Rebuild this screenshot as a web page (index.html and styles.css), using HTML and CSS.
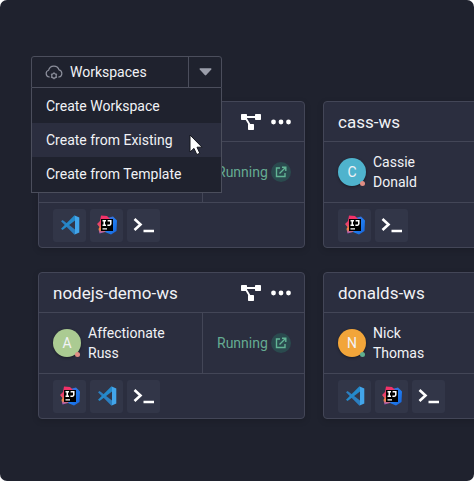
FILE: index.html
```html
<!DOCTYPE html>
<html lang="en">

<head>
    <meta charset="UTF-8">
    <meta name="viewport" content="width=device-width, initial-scale=1">
    <title>Workspaces</title>
    <link rel="stylesheet" href="styles.css">
</head>

<body>
    <!-- shared icons -->
    <svg class="sprite" aria-hidden="true">
        <defs>
            <linearGradient id="ij-warm" x1="0" y1="0" x2="0" y2="1">
                <stop offset="0" stop-color="#f52d68" />
                <stop offset="0.5" stop-color="#e8436b" />
                <stop offset="0.75" stop-color="#f58a3c" />
                <stop offset="1" stop-color="#9b4fc9" />
            </linearGradient>
            <linearGradient id="ij-cool" x1="0" y1="0" x2="1" y2="1">
                <stop offset="0" stop-color="#5a5fc4" />
                <stop offset="0.5" stop-color="#1f7cf0" />
                <stop offset="1" stop-color="#1763d8" />
            </linearGradient>
        </defs>
        <symbol id="vscode" viewBox="0 0 20 20">
            <path d="M1 6.3 2.6 5 15 14.6V19.6L14 19.3Z" fill="#2b7fc0" />
            <path d="M1 13.7 2.6 15 15 5.4V.4L14 .7Z" fill="#2489ca" />
            <path d="M14.2.3 19.3 2.6V17.4L14.2 19.7Q15 19.3 15 18.4V1.6Q15 .7 14.2.3Z" fill="#42a5ea" />
        </symbol>
        <symbol id="intellij" viewBox="0 0 20 20">
            <path d="M10 3 16 1.5 20 5.5 19.5 16 14 19.5 8 17Z" fill="url(#ij-cool)" />
            <path d="M4 .5 10 1 14 5 8 17 2.5 18.5 1.5 14 2.5 12 0 9 3 6Z" fill="url(#ij-warm)" />
            <rect x="4" y="4" width="12" height="12" fill="#000" />
            <path d="M5.5 5.8H9M7.25 5.8V10.2M5.5 10.2H9M10.6 5.8H13.8V8.8Q13.8 10.2 12.4 10.2H10.4" fill="none" stroke="#fff" stroke-width="1.5" />
            <path d="M5.5 13.8H10" stroke="#fff" stroke-width="1.3" />
        </symbol>
        <symbol id="terminal" viewBox="0 0 22 16">
            <path d="M1.5 2 7.5 7.5 1.5 13" fill="none" stroke="#fff" stroke-width="2.6" />
            <path d="M10.5 14H21" stroke="#fff" stroke-width="2.4" />
        </symbol>
        <symbol id="network" viewBox="0 0 20 16">
            <path d="M3 3H17M4 3 10 13" fill="none" stroke="#fff" stroke-width="1.8" />
            <rect x="0" y="0" width="6" height="6" rx=".7" fill="#fff" />
            <rect x="14" y="0" width="6" height="6" rx=".7" fill="#fff" />
            <rect x="7" y="10" width="6" height="6" rx=".7" fill="#fff" />
        </symbol>
        <symbol id="dots" viewBox="0 0 20 6">
            <circle cx="2.5" cy="3" r="2.4" fill="#fff" />
            <circle cx="10" cy="3" r="2.4" fill="#fff" />
            <circle cx="17.5" cy="3" r="2.4" fill="#fff" />
        </symbol>
        <symbol id="open" viewBox="0 0 12 12">
            <path d="M5 2H1.5V10.5H10V7M7 1.2H10.8V5M10.5 1.5 4.5 7.5" fill="none" stroke="#62b595" stroke-width="1.4" />
        </symbol>
    </svg>

    <main class="page">
        <div class="dropdown">
            <div class="dropdown-bar">
                <button class="dropdown-main" type="button">
                    <svg class="cloud" viewBox="0 0 18 15" aria-hidden="true">
                        <path d="M4.8 12H4.2A3.5 3.5 0 0 1 3.6 5.2A5.4 5.4 0 0 1 14 4.8A3.7 3.7 0 0 1 14 12H13.2" />
                        <circle cx="9" cy="10.8" r="2.3" />
                        <path d="M9 7.3V8.5M9 13.1V14.3M6 9 7 9.6M11 12 12 12.6M12 9 11 9.6M7 12 6 12.6" />
                    </svg>
                    Workspaces
                </button>
                <button class="dropdown-toggle" type="button" aria-label="Toggle menu">
                    <svg class="caret" viewBox="0 0 14 8" aria-hidden="true">
                        <path d="M1.2 0H12.8Q14 .3 13.2 1.3L7.8 7.3Q7 8 6.2 7.3L.8 1.3Q0 .3 1.2 0Z" />
                    </svg>
                </button>
            </div>
            <div class="menu">
                <button class="menu-item" type="button">Create Workspace</button>
                <button class="menu-item active" type="button">Create from Existing</button>
                <button class="menu-item" type="button">Create from Template</button>
                <svg class="cursor" viewBox="0 0 14 22" aria-hidden="true">
                    <path d="M1 1V18L5 14.4 7.8 20.6 10.8 19.2 8 13.2H13Z" />
                </svg>
            </div>
        </div>

        <section class="cards">
            <article class="card">
                <header class="card-head">
                    <h2></h2>
                    <button class="icon-btn" type="button" aria-label="Topology"><svg class="network"><use href="#network" /></svg></button>
                    <button class="icon-btn" type="button" aria-label="More"><svg class="dots"><use href="#dots" /></svg></button>
                </header>
                <div class="card-body">
                    <div class="owner"></div>
                    <div class="status">
                        Running
                        <button class="open-btn" type="button" aria-label="Open"><svg><use href="#open" /></svg></button>
                    </div>
                </div>
                <footer class="card-foot">
                    <button class="tile" type="button" aria-label="VS Code"><svg class="app"><use href="#vscode" /></svg></button>
                    <button class="tile" type="button" aria-label="IntelliJ"><svg class="app"><use href="#intellij" /></svg></button>
                    <button class="tile" type="button" aria-label="Terminal"><svg class="term"><use href="#terminal" /></svg></button>
                </footer>
            </article>

            <article class="card">
                <header class="card-head">
                    <h2>cass-ws</h2>
                </header>
                <div class="card-body">
                    <div class="owner">
                        <span class="avatar teal">C</span>
                        <p>Cassie<br>Donald</p>
                    </div>
                </div>
                <footer class="card-foot">
                    <button class="tile" type="button" aria-label="IntelliJ"><svg class="app"><use href="#intellij" /></svg></button>
                    <button class="tile" type="button" aria-label="Terminal"><svg class="term"><use href="#terminal" /></svg></button>
                </footer>
            </article>

            <article class="card">
                <header class="card-head">
                    <h2>nodejs-demo-ws</h2>
                    <button class="icon-btn" type="button" aria-label="Topology"><svg class="network"><use href="#network" /></svg></button>
                    <button class="icon-btn" type="button" aria-label="More"><svg class="dots"><use href="#dots" /></svg></button>
                </header>
                <div class="card-body">
                    <div class="owner">
                        <span class="avatar green">A</span>
                        <p>Affectionate<br>Russ</p>
                    </div>
                    <div class="status">
                        Running
                        <button class="open-btn" type="button" aria-label="Open"><svg><use href="#open" /></svg></button>
                    </div>
                </div>
                <footer class="card-foot">
                    <button class="tile" type="button" aria-label="IntelliJ"><svg class="app"><use href="#intellij" /></svg></button>
                    <button class="tile" type="button" aria-label="VS Code"><svg class="app"><use href="#vscode" /></svg></button>
                    <button class="tile" type="button" aria-label="Terminal"><svg class="term"><use href="#terminal" /></svg></button>
                </footer>
            </article>

            <article class="card">
                <header class="card-head">
                    <h2>donalds-ws</h2>
                </header>
                <div class="card-body">
                    <div class="owner">
                        <span class="avatar orange online">N</span>
                        <p>Nick<br>Thomas</p>
                    </div>
                </div>
                <footer class="card-foot">
                    <button class="tile" type="button" aria-label="VS Code"><svg class="app"><use href="#vscode" /></svg></button>
                    <button class="tile" type="button" aria-label="IntelliJ"><svg class="app"><use href="#intellij" /></svg></button>
                    <button class="tile" type="button" aria-label="Terminal"><svg class="term"><use href="#terminal" /></svg></button>
                </footer>
            </article>
        </section>
    </main>
</body>

</html>
```
FILE: styles.css
```css
* {
    box-sizing: border-box;
}

body {
    margin: 0;
    background-color: #fff;
    color: #f1f2f6;
    font-family: Roboto, "Liberation Sans", sans-serif;
    font-size: 14px;
    line-height: 20px;
}

button {
    margin: 0;
    padding: 0;
    border: 0;
    background: none;
    color: inherit;
    font: inherit;
    cursor: pointer;
}

svg {
    display: block;
}

h2,
p {
    margin: 0;
}

.sprite {
    position: absolute;
    width: 0;
    height: 0;
}

.page {
    min-height: 100vh;
    padding: 56px 0 56px 38px;
    border-radius: 7px;
    background-color: #1f222e;
    overflow: hidden;
}

/* dropdown */
.dropdown {
    position: relative;
    width: 191px;
    margin-left: -7px;
    margin-bottom: 13px;
}

.dropdown-bar {
    display: flex;
    height: 32px;
    border: 1px solid #4b4e5c;
    border-radius: 3px 3px 0 0;
}

.dropdown-main {
    display: flex;
    flex: 1;
    align-items: center;
    gap: 7px;
    padding-left: 13px;
}

.cloud {
    width: 18px;
    height: 15px;
    fill: none;
    stroke: #8b8e9b;
    stroke-width: 1.2;
}

.dropdown-toggle {
    display: flex;
    align-items: center;
    justify-content: center;
    width: 33px;
    border-left: 1px solid #4b4e5c;
}

.caret {
    width: 13px;
    height: 8px;
    fill: #9b9eaa;
}

.menu {
    position: absolute;
    top: 100%;
    left: 0;
    z-index: 1;
    width: 100%;
    padding: 1px 0;
    border: 1px solid #4b4e5c;
    border-top: 0;
    background-color: #1f222e;
}

.menu-item {
    display: block;
    width: 100%;
    height: 34px;
    padding-left: 14px;
    text-align: left;
}

.menu-item.active {
    background-color: #2b2e3f;
}

.cursor {
    position: absolute;
    top: 46px;
    right: 18px;
    width: 14px;
    height: 22px;
    fill: #fff;
    stroke: #15171f;
    stroke-width: 1;
}

/* cards */
.cards {
    display: grid;
    grid-template-columns: repeat(2, 267px);
    gap: 24px 18px;
}

.card {
    border: 1px solid #434657;
    border-radius: 4px;
    background-color: #2b2e3f;
    box-shadow: 0 2px 6px rgba(0, 0, 0, 0.15);
}

.card-head {
    display: flex;
    align-items: center;
    gap: 10px;
    height: 40px;
    padding: 0 13px 0 14px;
    border-bottom: 1px solid #434657;
}

.card-head h2 {
    flex: 1;
    font-size: 17px;
    font-weight: 400;
}

.network {
    width: 20px;
    height: 16px;
}

.dots {
    width: 20px;
    height: 6px;
}

.card-body {
    display: flex;
    height: 61px;
    border-bottom: 1px solid #434657;
}

.owner {
    display: flex;
    flex: 1;
    align-items: center;
    gap: 7px;
    padding-left: 14px;
}

.avatar {
    position: relative;
    width: 28px;
    height: 28px;
    border-radius: 50%;
    font-size: 14px;
    line-height: 28px;
    text-align: center;
    box-shadow: 0 1px 3px rgba(0, 0, 0, 0.4);
}

.avatar::after {
    content: "";
    position: absolute;
    right: 1px;
    bottom: 0;
    width: 5px;
    height: 5px;
    border-radius: 50%;
    background-color: #e08d84;
}

.avatar.online::after {
    background-color: #5fae8f;
}

.teal {
    background-color: #4fb3cd;
}

.green {
    background-color: #abcb92;
}

.orange {
    background-color: #f2a53a;
}

.status {
    display: flex;
    align-items: center;
    justify-content: space-between;
    width: 102px;
    padding: 0 13px 0 14px;
    border-left: 1px solid #434657;
    color: #65ab92;
}

.open-btn {
    display: flex;
    align-items: center;
    justify-content: center;
    width: 20px;
    height: 20px;
    border-radius: 50%;
    background-color: #2a4a4e;
}

.open-btn svg {
    width: 12px;
    height: 12px;
}

.card-foot {
    display: flex;
    align-items: center;
    gap: 4px;
    height: 44px;
    padding-left: 14px;
}

.tile {
    display: flex;
    align-items: center;
    justify-content: center;
    width: 33px;
    height: 33px;
    border-radius: 3px;
    background-color: #323648;
}

.app {
    width: 20px;
    height: 20px;
}

.term {
    width: 22px;
    height: 16px;
}
```
